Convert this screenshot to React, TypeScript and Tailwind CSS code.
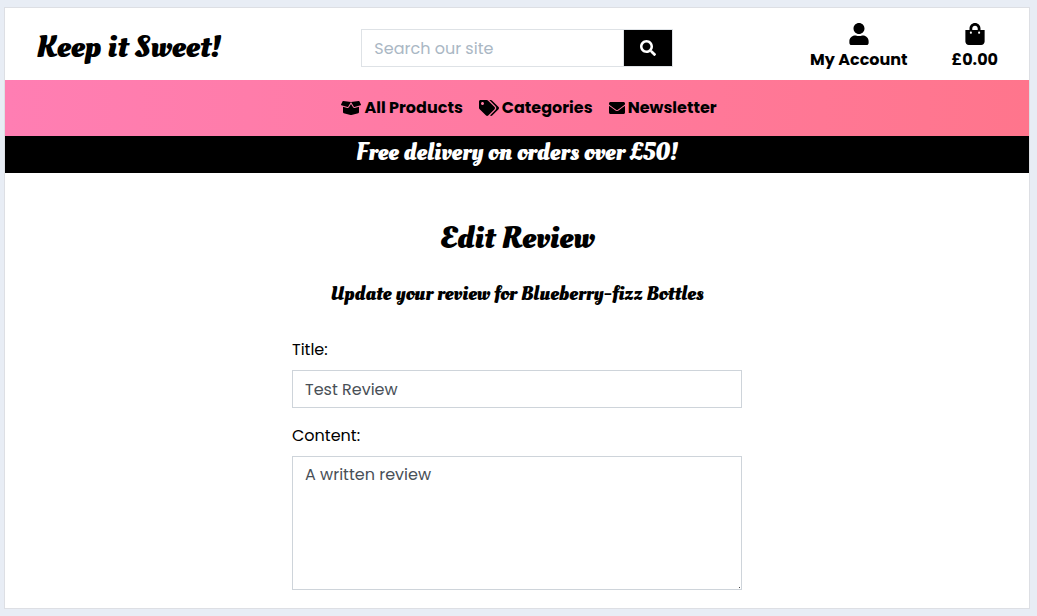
import { useState } from "react";
import {
  FaBoxOpen,
  FaEnvelope,
  FaSearch,
  FaShoppingBag,
  FaTags,
  FaUser,
} from "react-icons/fa";

const display =
  "font-['Oleo_Script','Liberation_Serif',serif] font-bold";

const navLinks = [
  { label: "All Products", icon: <FaBoxOpen className="h-4 w-5" /> },
  { label: "Categories", icon: <FaTags className="h-4 w-5" /> },
  { label: "Newsletter", icon: <FaEnvelope className="size-4" /> },
];

function Header() {
  return (
    <header className="grid h-18 grid-cols-3 items-center">
      <a href="#" className={`${display} pt-1.5 pl-[31px] text-[32px] leading-10 whitespace-nowrap`}>
        Keep it Sweet!
      </a>
      <form
        role="search"
        className="mx-[15px] mt-2 flex h-[38px] border border-[#dee2e6]"
        onSubmit={(e) => e.preventDefault()}
      >
        <input
          type="search"
          aria-label="Search our site"
          placeholder="Search our site"
          className="min-w-0 flex-1 border-r border-[#dee2e6] bg-white px-3 pt-0.5 outline-none placeholder:text-[#aab7c4]"
        />
        <button
          type="submit"
          aria-label="Search"
          className="flex w-12 items-center justify-center bg-black text-white"
        >
          <FaSearch className="size-4" />
        </button>
      </form>
      <div className="flex justify-end gap-11 pt-[7px] pr-[31px] font-bold">
        <a href="#" className="flex flex-col items-center gap-[3px]">
          <FaUser className="h-[22px] w-5" />
          <span className="whitespace-nowrap leading-6">My Account</span>
        </a>
        <a href="#" className="flex flex-col items-center gap-[3px]">
          <FaShoppingBag className="h-[22px] w-5" />
          <span className="leading-6">£0.00</span>
        </a>
      </div>
    </header>
  );
}

function Nav() {
  return (
    <nav className="bg-linear-to-r from-[#ff7eb3] to-[#ff758c]">
      <ul className="flex h-14 items-center justify-center gap-4 pl-6 font-bold">
        {navLinks.map((link) => (
          <li key={link.label}>
            <a href="#" className="flex items-center gap-[3px] leading-6">
              {link.icon}
              {link.label}
            </a>
          </li>
        ))}
      </ul>
    </nav>
  );
}

function ReviewForm() {
  const [title, setTitle] = useState("Test Review");
  const [content, setContent] = useState("A written review");
  const field =
    "block w-full border border-[#ced4da] bg-white px-3 leading-6 text-[#495057] outline-none";

  return (
    <form className="mx-auto mt-8 w-full max-w-[450px]">
      <label htmlFor="title" className="mb-2 block leading-6">
        Title:
      </label>
      <input
        id="title"
        className={`${field} mb-4 h-[38px]`}
        value={title}
        onChange={(e) => setTitle(e.target.value)}
      />
      <label htmlFor="content" className="mb-2 block leading-6">
        Content:
      </label>
      <div className="relative">
        <textarea
          id="content"
          rows={5}
          className={`${field} resize-none py-1.5`}
          value={content}
          onChange={(e) => setContent(e.target.value)}
        />
        <span className="pointer-events-none absolute right-0.5 bottom-0.5 size-px bg-[#444]" />
      </div>
    </form>
  );
}

export default function App() {
  return (
    <div className="min-h-screen bg-[#e8edf5] pt-[7px] pr-[7px] pb-[7px] pl-1 font-['Poppins','Inter',sans-serif] text-base text-black">
      <div className="border border-[#dddfe4] bg-white">
        <Header />
        <Nav />
        <p className={`${display} bg-black pb-1 text-center text-2xl leading-[33px] text-white`}>
          Free delivery on orders over £50!
        </p>
        <main className="px-4 pt-[45px] pb-[18px]">
          <h1 className={`${display} text-center text-[32px] leading-10`}>Edit Review</h1>
          <h2 className={`${display} mt-6 text-center text-xl leading-6`}>
            Update your review for Blueberry-fizz Bottles
          </h2>
          <ReviewForm />
        </main>
      </div>
    </div>
  );
}
